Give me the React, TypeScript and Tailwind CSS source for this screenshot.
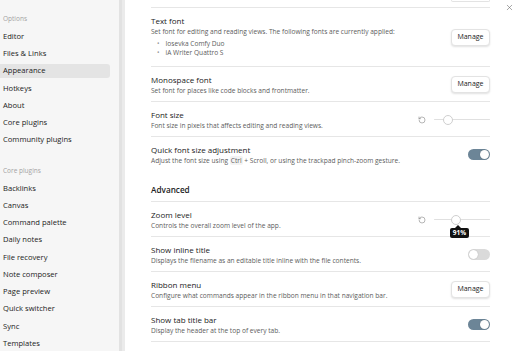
import { RotateCcw, X } from 'lucide-react';
import type { ReactNode } from 'react';

const OPTIONS = ['Editor', 'Files & Links', 'Appearance', 'Hotkeys', 'About', 'Core plugins', 'Community plugins'];
const CORE = [
  'Backlinks',
  'Canvas',
  'Command palette',
  'Daily notes',
  'File recovery',
  'Note composer',
  'Page preview',
  'Quick switcher',
  'Sync',
  'Templates'
];

function NavItem({ label, active }: { label: string; active?: boolean }) {
  return (
    <div
      className={`h-[15px] flex items-center pl-[3px] rounded-r-[3px] w-[110px] text-[7.6px] text-[#222] ${
        active ? 'bg-[#e4e4e4]' : ''
      }`}
    >
      {label}
    </div>
  );
}

function Row({ title, desc, children, extra }: { title: string; desc: ReactNode; children?: ReactNode; extra?: ReactNode }) {
  return (
    <div className="flex items-center border-t border-[#e6e6e6] pt-[6px] pb-[5px]">
      <div className="flex-1 min-w-0">
        <div className="text-[8px] leading-[13px] text-[#222]">{title}</div>
        <div className="text-[6.6px] leading-[10px] text-[#5c5c5c]">{desc}</div>
        {extra}
      </div>
      <div className="shrink-0 flex items-center">{children}</div>
    </div>
  );
}

function ManageButton() {
  return (
    <button className="w-[39px] h-[17px] rounded-[4px] bg-white border border-[#e3e3e3] shadow-[0_1px_2px_rgba(0,0,0,0.12)] text-[7px] text-[#222]">
      Manage
    </button>
  );
}

function Toggle({ on }: { on?: boolean }) {
  return (
    <div
      className={`w-[22px] h-[11px] rounded-full p-[1px] flex ${on ? 'bg-[#6c8597] justify-end' : 'bg-[#dadada] justify-start'}`}
    >
      <div className="w-[9px] h-[9px] rounded-full bg-white shadow-[0_0_1px_rgba(0,0,0,0.3)]" />
    </div>
  );
}

function Slider({ percent, tooltip }: { percent: number; tooltip?: string }) {
  return (
    <div className="flex items-center gap-[8px]">
      <RotateCcw size={8} strokeWidth={1.6} className="text-[#777]" />
      <div className="relative w-[56px] h-[10px] flex items-center">
        <div className="w-full h-[1.5px] bg-[#e0e0e0] rounded-full" />
        <div
          className="absolute top-0 w-[10px] h-[10px] -ml-[5px] rounded-full bg-white border border-[#cfcfcf]"
          style={{ left: `${percent}%` }}
        >
          {tooltip && (
            <div className="absolute left-[-2px] top-[9px] flex flex-col items-start">
              <div className="ml-[5px] w-0 h-0 border-x-[3px] border-x-transparent border-b-[3px] border-b-[#111]" />
              <div className="bg-[#111] text-white text-[6.5px] font-bold leading-[10px] px-[3px] rounded-[2px]">
                {tooltip}
              </div>
            </div>
          )}
        </div>
      </div>
    </div>
  );
}

export default function App() {
  return (
    <div className="w-[517px] h-[351px] overflow-hidden flex bg-white relative font-['Open_Sans',sans-serif]">
      <aside className="w-[119px] shrink-0 bg-[#f6f6f6] pt-[11px] flex flex-col gap-[2.5px]">
        <div className="h-[16px] flex items-center pl-[3px] text-[6.5px] text-[#a3a3a3]">Options</div>
        {OPTIONS.map((o) => (
          <NavItem key={o} label={o} active={o === 'Appearance'} />
        ))}
        <div className="h-[16px] mt-[13px] flex items-center pl-[3px] text-[6.5px] text-[#a3a3a3]">Core plugins</div>
        {CORE.map((o) => (
          <NavItem key={o} label={o} />
        ))}
      </aside>
      <div className="w-[6px] shrink-0 bg-[#ebebeb] flex justify-start">
        <div className="w-[3px] bg-[#e2e2e2]" />
      </div>

      <main className="flex-1 pl-[26px] pr-[27px]">
        <div className="h-[7px] flex justify-end">
          <div className="w-[39px] h-[2px] border-x border-b border-[#e3e3e3] rounded-b-[4px]" />
        </div>

        <Row
          title="Text font"
          desc="Set font for editing and reading views. The following fonts are currently applied:"
          extra={
            <ul className="pt-[1.5px] pb-[4.5px] text-[6.6px] leading-[9px] text-[#5c5c5c]">
              <li className="flex"><span className="w-[14.5px] pl-[6px] text-[#999]">•</span>Iosevka Comfy Duo</li>
              <li className="flex"><span className="w-[14.5px] pl-[6px] text-[#999]">•</span>iA Writer Quattro S</li>
            </ul>
          }
        >
          <ManageButton />
        </Row>

        <Row title="Monospace font" desc="Set font for places like code blocks and frontmatter.">
          <ManageButton />
        </Row>

        <Row title="Font size" desc="Font size in pixels that affects editing and reading views.">
          <Slider percent={25} />
        </Row>

        <Row
          title="Quick font size adjustment"
          desc={
            <>
              Adjust the font size using <span className="px-[1px] rounded-[2px] bg-[#f3f3f3]">Ctrl</span> + Scroll, or using the trackpad pinch-zoom gesture.
            </>
          }
        >
          <Toggle on />
        </Row>

        <div className="pt-[13px] pb-[5px] text-[8.2px] leading-[12px] font-semibold text-[#222]">Advanced</div>

        <Row title="Zoom level" desc="Controls the overall zoom level of the app.">
          <Slider percent={39} tooltip="91%" />
        </Row>

        <Row title="Show inline title" desc="Displays the filename as an editable title inline with the file contents.">
          <Toggle />
        </Row>

        <Row title="Ribbon menu" desc="Configure what commands appear in the ribbon menu in that navigation bar.">
          <ManageButton />
        </Row>

        <div className="border-b border-[#e6e6e6]">
          <Row title="Show tab title bar" desc="Display the header at the top of every tab.">
            <Toggle on />
          </Row>
        </div>
      </main>

      <button className="absolute top-[2px] right-[3px] w-[10px] h-[10px] flex items-center justify-center text-[#666]">
        <X size={9} strokeWidth={1.5} />
      </button>
    </div>
  );
}
